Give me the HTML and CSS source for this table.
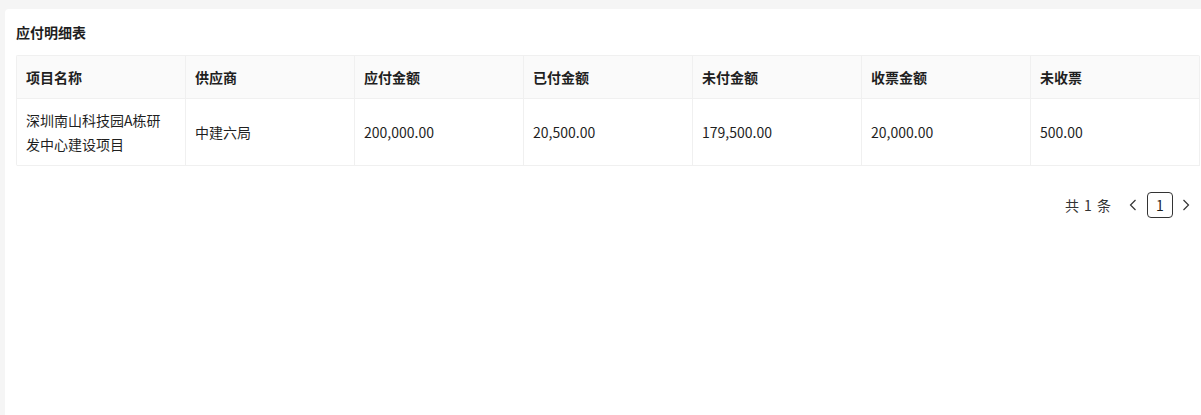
FILE: index.html
```html
<!DOCTYPE html>
<html lang="zh-CN">
<head>
<meta charset="utf-8">
<title>应付明细表</title>
<link rel="stylesheet" href="styles.css">
</head>
<body>
<div class="page">
  <section class="card">
    <h2 class="card-title">应付明细表</h2>
    <table class="grid">
      <colgroup>
        <col><col><col><col><col><col><col>
      </colgroup>
      <thead>
        <tr>
          <th>项目名称</th>
          <th>供应商</th>
          <th>应付金额</th>
          <th>已付金额</th>
          <th>未付金额</th>
          <th>收票金额</th>
          <th>未收票</th>
        </tr>
      </thead>
      <tbody>
        <tr>
          <td>深圳南山科技园A栋研发中心建设项目</td>
          <td>中建六局</td>
          <td>200,000.00</td>
          <td>20,500.00</td>
          <td>179,500.00</td>
          <td>20,000.00</td>
          <td>500.00</td>
        </tr>
      </tbody>
    </table>
    <nav class="pager">
      <span class="pager-total">共 1 条</span>
      <span class="pager-arrow pager-prev">
        <svg width="12" height="14" viewBox="0 0 12 14"><path d="M8.5 2 L3.5 7 L8.5 12" fill="none" stroke="#333" stroke-width="1.2"/></svg>
      </span>
      <span class="pager-item">1</span>
      <span class="pager-arrow">
        <svg width="12" height="14" viewBox="0 0 12 14"><path d="M3.5 2 L8.5 7 L3.5 12" fill="none" stroke="#333" stroke-width="1.2"/></svg>
      </span>
    </nav>
  </section>
</div>
</body>
</html>
```

FILE: styles.css
```css
html, body {
  margin: 0;
  padding: 0;
  background: #f5f5f5;
  font-family: "Noto Sans CJK SC", "Noto Sans", "Liberation Sans", sans-serif;
  font-size: 14px;
  color: rgba(0, 0, 0, 0.88);
}

.page {
  padding: 9px 0 0 5px;
  height: 415px;
  box-sizing: border-box;
  overflow: hidden;
}

.card {
  background: #fff;
  border-radius: 4px 0 0 0;
  padding: 12px 1px 0 11px;
  height: 406px;
  box-sizing: border-box;
}

.card-title {
  margin: 0 0 12px 0;
  font-size: 14px;
  line-height: 22px;
  font-weight: 700;
  color: #1f1f1f;
}

.grid {
  width: 1184px;
  border-collapse: separate;
  border-spacing: 0;
  table-layout: fixed;
  border: 1px solid #f0f0f0;
  border-right: 0;
  border-bottom: 0;
  border-radius: 2px;
}

.grid th,
.grid td {
  border-right: 1px solid #f0f0f0;
  border-bottom: 1px solid #f0f0f0;
  padding: 0 12px 0 9px;
  text-align: left;
  line-height: 24px;
  vertical-align: middle;
}

.grid th {
  background: #fafafa;
  height: 42px;
  font-weight: 700;
  color: #1f1f1f;
}

.grid td {
  height: 66px;
  color: #1f1f1f;
}

.pager {
  display: flex;
  justify-content: flex-end;
  align-items: center;
  margin-top: 26px;
  padding-right: 8px;
  height: 26px;
}

.pager-total {
  color: #333;
  margin-right: 16px;
  word-spacing: 2px;
}

.pager-arrow {
  display: flex;
  align-items: center;
  justify-content: center;
  width: 12px;
  height: 26px;
}

.pager-prev {
  margin-right: 8px;
}

.pager-item {
  display: flex;
  align-items: center;
  justify-content: center;
  width: 24px;
  height: 24px;
  border: 1px solid #333;
  border-radius: 4px;
  margin-right: 7px;
  color: #1f1f1f;
}
```
